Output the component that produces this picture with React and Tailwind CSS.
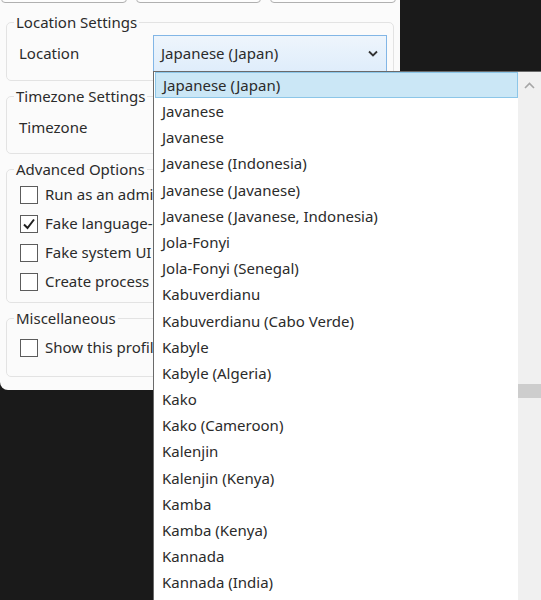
import React from 'react';

const languages = [
    'Japanese (Japan)',
    'Javanese',
    'Javanese',
    'Javanese (Indonesia)',
    'Javanese (Javanese)',
    'Javanese (Javanese, Indonesia)',
    'Jola-Fonyi',
    'Jola-Fonyi (Senegal)',
    'Kabuverdianu',
    'Kabuverdianu (Cabo Verde)',
    'Kabyle',
    'Kabyle (Algeria)',
    'Kako',
    'Kako (Cameroon)',
    'Kalenjin',
    'Kalenjin (Kenya)',
    'Kamba',
    'Kamba (Kenya)',
    'Kannada',
    'Kannada (India)',
];

function Checkbox({ checked }) {
    return (
        <span className="w-[18px] h-[18px] border border-[#5c5c5c] bg-white flex items-center justify-center shrink-0">
            {checked && (
                <svg width="14" height="14" viewBox="0 0 14 14">
                    <path d="M2 7.5 L5.5 11 L12 2.5" fill="none" stroke="#1f1f1f" strokeWidth="2" />
                </svg>
            )}
        </span>
    );
}

function Group({ title, children, className = '' }) {
    return (
        <fieldset className={`border border-[#e3e3e3] rounded-[5px] px-[12px] ${className}`}>
            <legend className="-ml-[5px] px-[2px] h-[20px] leading-[20px] text-[#2b2b2b]">{title}</legend>
            {children}
        </fieldset>
    );
}

function Combo({ value }) {
    return (
        <div className="ml-auto -mr-[6px] w-[234px] h-[37px] border border-[#82b6e6] bg-gradient-to-b from-[#eef5fc] to-[#dfedfb] flex items-center pl-[7px] pr-[8px]">
            <span className="flex-1 text-[#2b2b2b]">{value}</span>
            <svg width="10" height="7" viewBox="0 0 10 7">
                <path d="M1 1.5 L5 5.5 L9 1.5" fill="none" stroke="#333" strokeWidth="1.8" />
            </svg>
        </div>
    );
}

// the open list covers everything right of x=153, so labels are clipped there
function CheckRow({ label, checked }) {
    return (
        <div className="h-[29px] flex items-center gap-[7px] pl-[1px] whitespace-nowrap">
            <Checkbox checked={checked} />
            <span className="w-[108px] overflow-hidden text-[#2b2b2b]">{label}</span>
        </div>
    );
}

export default function App() {
    return (
        <div className="relative w-[541px] h-[600px] bg-[#1a1a1a] overflow-hidden text-[15px] font-['Noto_Sans',sans-serif]">
            <div className="w-[400px] h-[390px] bg-[#fbfbfb] rounded-bl-[8px] flex flex-col px-[6px] overflow-hidden">
                <div className="flex gap-[9px] -mt-[21px] -mx-[5px] pr-[3px]">
                    {[0, 1, 2].map((i) => (
                        <div key={i} className="w-[126px] h-[24px] border border-[#b0b0b0] rounded-[4px] bg-[#fdfdfd]" />
                    ))}
                </div>

                <Group title="Location Settings" className="mt-[9px] pt-[3px] pb-[8px]">
                    <div className="h-[37px] flex items-center">
                        <span className="text-[#2b2b2b]">Location</span>
                        <Combo value="Japanese (Japan)" />
                    </div>
                </Group>

                <Group title="Timezone Settings" className="mt-[5px] pt-[3px] pb-[7px]">
                    <div className="h-[37px] flex items-center">
                        <span className="text-[#2b2b2b]">Timezone</span>
                        <Combo value="" />
                    </div>
                </Group>

                <Group title="Advanced Options" className="mt-[5px] pt-[1px] pb-[6px]">
                    <CheckRow label="Run as an administrator" />
                    <CheckRow label="Fake language-dependent settings" checked />
                    <CheckRow label="Fake system UI language" />
                    <CheckRow label="Create process via debugger" />
                </Group>

                <Group title="Miscellaneous" className="mt-[5px] pt-[5px] pb-[14px]">
                    <CheckRow label="Show this profile in shortcut menu" />
                </Group>
            </div>

            <div className="absolute left-[153px] top-[71px] w-[400px] h-[540px] bg-white border-l border-t border-[#6a6a6a] flex">
                <div className="w-[364px] pl-[1px]">
                    {languages.map((lang, i) => (
                        <div
                            key={i}
                            className={`h-[26.2px] flex items-center pl-[7px] text-[#2b2b2b] ${
                                i === 0 ? 'bg-[#cbe7f6] border border-[#8cc6e8]' : ''
                            }`}
                        >
                            {lang}
                        </div>
                    ))}
                </div>
                <div className="w-[23px] bg-[#f0f0f0] flex flex-col items-center">
                    <div className="h-[26px] flex items-center justify-center">
                        <svg width="11" height="7" viewBox="0 0 11 7">
                            <path d="M1 6 L5.5 1.5 L10 6" fill="none" stroke="#a6a6a6" strokeWidth="1.6" />
                        </svg>
                    </div>
                    <div className="mt-[286px] w-full h-[14px] bg-[#cdcdcd]" />
                </div>
            </div>
        </div>
    );
}
